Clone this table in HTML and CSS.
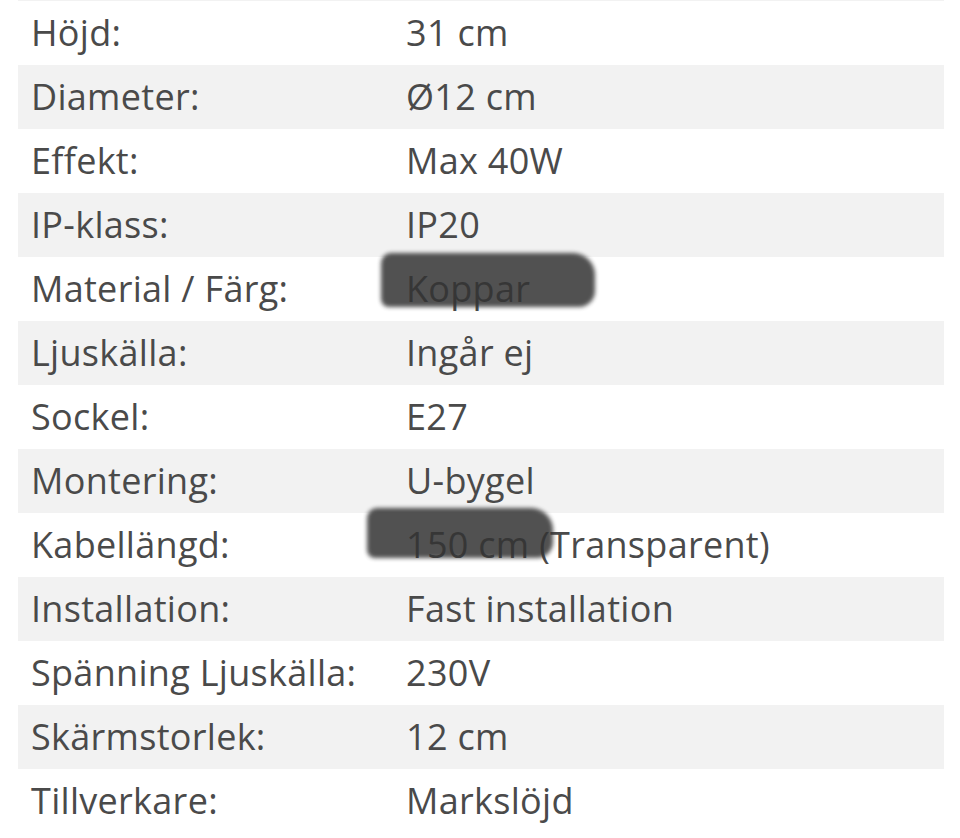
FILE: index.html
```html
<!DOCTYPE html>
<html lang="sv">
<head>
<meta charset="utf-8">
<link rel="stylesheet" href="styles.css">
</head>
<body>
<div class="specs">
  <div class="row"><div class="label">Höjd:</div><div class="value">31 cm</div></div>
  <div class="row"><div class="label">Diameter:</div><div class="value">Ø12 cm</div></div>
  <div class="row"><div class="label">Effekt:</div><div class="value">Max 40W</div></div>
  <div class="row"><div class="label">IP-klass:</div><div class="value">IP20</div></div>
  <div class="row"><div class="label">Material / Färg:</div><div class="value"><span class="redact redact-a"></span>Koppar</div></div>
  <div class="row"><div class="label">Ljuskälla:</div><div class="value">Ingår ej</div></div>
  <div class="row"><div class="label">Sockel:</div><div class="value">E27</div></div>
  <div class="row"><div class="label">Montering:</div><div class="value">U-bygel</div></div>
  <div class="row"><div class="label">Kabellängd:</div><div class="value"><span class="redact redact-b"></span>150 cm (Transparent)</div></div>
  <div class="row"><div class="label">Installation:</div><div class="value">Fast installation</div></div>
  <div class="row"><div class="label">Spänning Ljuskälla:</div><div class="value">230V</div></div>
  <div class="row"><div class="label">Skärmstorlek:</div><div class="value">12 cm</div></div>
  <div class="row"><div class="label">Tillverkare:</div><div class="value">Markslöjd</div></div>
</div>
</body>
</html>
```
FILE: styles.css
```css
html, body {
  margin: 0;
  padding: 0;
  background: #ffffff;
}
body {
  font-family: "Open Sans", "DejaVu Sans", sans-serif;
  color: #4a4a4a;
  overflow: hidden;
}
.specs {
  margin: 0 16px 0 18px;
  border-top: 1px solid #f2f2f2;
}
.row {
  display: grid;
  grid-template-columns: 375px 1fr;
  height: 64px;
  align-items: center;
  padding-left: 13px;
  font-size: 36px;
  letter-spacing: 0.3px;
  line-height: 1;
}
.row:nth-child(even) {
  background: #f2f2f2;
}
.value {
  position: relative;
}
.redact {
  position: absolute;
  background: #333333;
  opacity: 0.85;
  filter: blur(2px);
  border-radius: 10px 22px 16px 8px;
}
.redact-a {
  left: -25px;
  top: -18px;
  width: 214px;
  height: 54px;
}
.redact-b {
  left: -39px;
  top: -19px;
  width: 186px;
  height: 50px;
}
```
